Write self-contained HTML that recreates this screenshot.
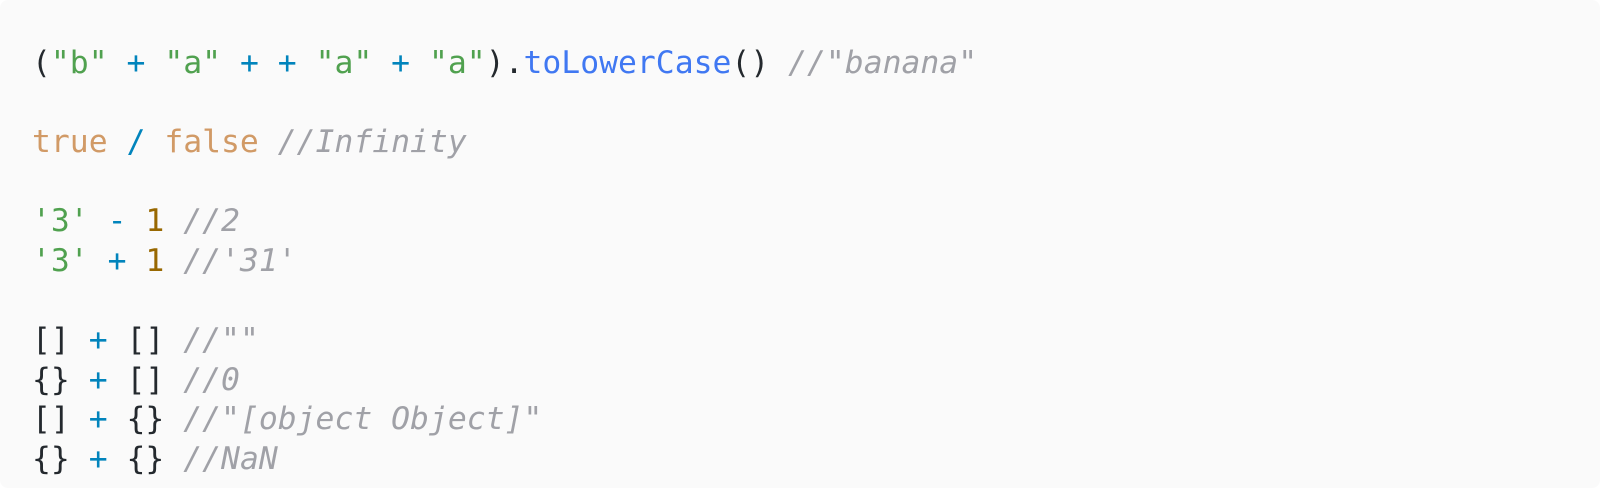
<!DOCTYPE html>
<html><head><style>
html,body{margin:0;padding:0;background:#fff;width:1600px;height:498px;overflow:hidden}
.box{position:absolute;left:0;top:0;width:1600px;height:488px;background:#fafafa;border-radius:8px}
pre{margin:0;position:absolute;left:32px;top:44px;font-family:"DejaVu Sans Mono","Liberation Mono",monospace;font-size:31.4px;line-height:39.6px;color:#383a42}
.s{color:#50a14f}.o{color:#0184bc}.f{color:#4078f2}.c{color:#a0a1a7;font-style:italic}.b{color:#d19a66}.n{color:#986801}.p{color:#24292e}
</style></head><body><div class="box"></div>
<pre><span class="p">(</span><span class="s">"b"</span> <span class="o">+</span> <span class="s">"a"</span> <span class="o">+</span> <span class="o">+</span> <span class="s">"a"</span> <span class="o">+</span> <span class="s">"a"</span><span class="p">).</span><span class="f">toLowerCase</span><span class="p">()</span> <span class="c">//"banana"</span>

<span class="b">true</span> <span class="o">/</span> <span class="b">false</span> <span class="c">//Infinity</span>

<span class="s">'3'</span> <span class="o">-</span> <span class="n">1</span> <span class="c">//2</span>
<span class="s">'3'</span> <span class="o">+</span> <span class="n">1</span> <span class="c">//'31'</span>

<span class="p">[]</span> <span class="o">+</span> <span class="p">[]</span> <span class="c">//""</span>
<span class="p">{}</span> <span class="o">+</span> <span class="p">[]</span> <span class="c">//0</span>
<span class="p">[]</span> <span class="o">+</span> <span class="p">{}</span> <span class="c">//"[object Object]"</span>
<span class="p">{}</span> <span class="o">+</span> <span class="p">{}</span> <span class="c">//NaN</span></pre>
</body></html>
